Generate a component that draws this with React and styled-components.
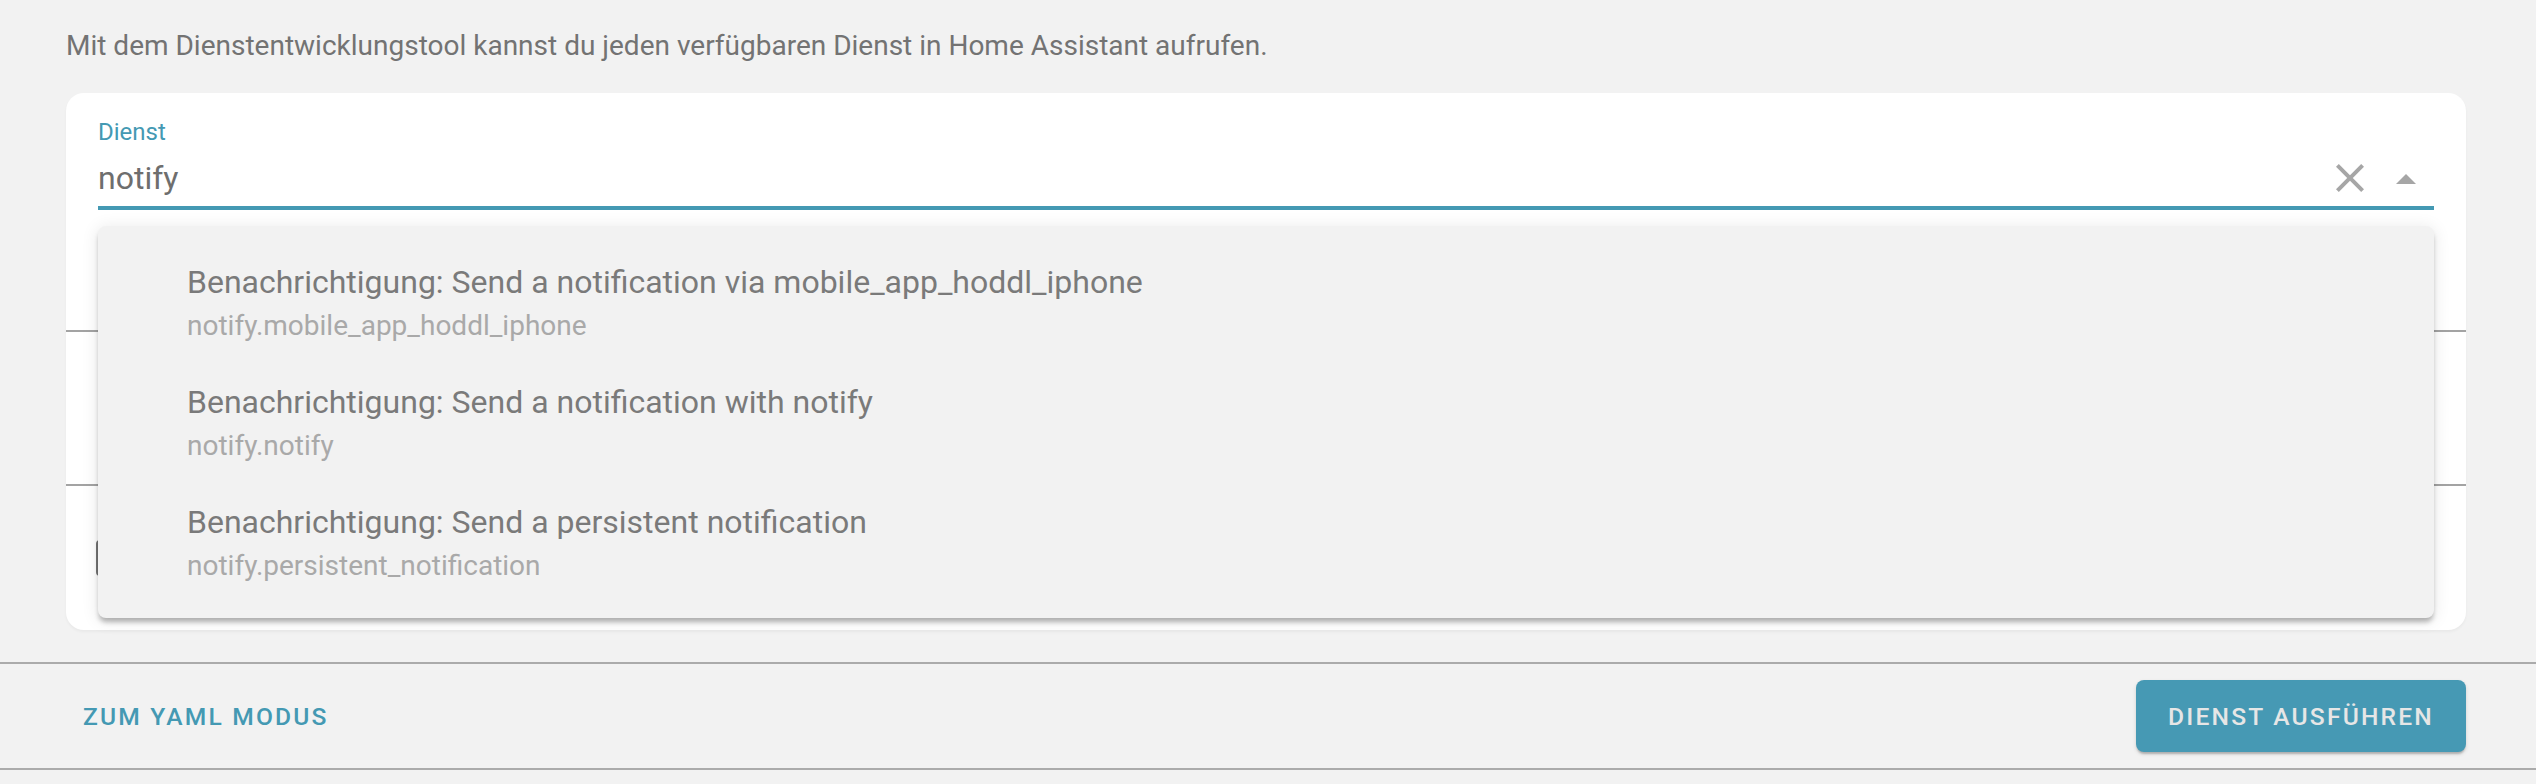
import React from "react";
import styled, { createGlobalStyle } from "styled-components";

const GlobalStyle = createGlobalStyle`
  html, body {
    margin: 0;
    padding: 0;
    background: #f2f2f2;
    font-family: Roboto, "Noto Sans", "Liberation Sans", sans-serif;
  }
`;

const Main = styled.div`
  padding: 26px 70px 0 66px;
`;

const Description = styled.p`
  margin: 0;
  font-size: 28px;
  line-height: 40px;
  color: #737373;
`;

const Card = styled.div`
  position: relative;
  margin-top: 27px;
  background: #ffffff;
  border-radius: 18px;
  box-shadow: 0 2px 3px rgba(0, 0, 0, 0.04);
`;

const Field = styled.div`
  padding: 27px 32px 0;
`;

const Label = styled.div`
  font-size: 24px;
  line-height: 24px;
  color: #4499b3;
`;

const InputRow = styled.div`
  display: flex;
  align-items: center;
  height: 48px;
  margin-top: 10px;
  margin-bottom: 4px;
`;

const Value = styled.div`
  flex: 1;
  font-size: 32px;
  line-height: 48px;
  color: #6e6e6e;
`;

const IconButton = styled.div`
  width: 48px;
  height: 48px;
  margin-left: ${(props) => props.gap || 0}px;
  margin-right: ${(props) => props.end || 0}px;
  display: flex;
  align-items: center;
  justify-content: center;
  color: #a6a6a6;
`;

const Underline = styled.div`
  height: 4px;
  background: #4499b3;
`;

const Section = styled.div`
  height: ${(props) => props.h}px;
  display: flex;
  align-items: center;
  padding-left: 30px;
`;

const Divider = styled.div`
  height: 2px;
  background: #a3a3a3;
`;

const Checkbox = styled.div`
  width: 36px;
  height: 36px;
  box-sizing: border-box;
  border: 4px solid #757575;
  border-radius: 4px;
`;

const Menu = styled.div`
  position: absolute;
  top: 133px;
  left: 32px;
  right: 32px;
  padding: 16px 0;
  background: #f2f2f2;
  border-radius: 8px;
  box-shadow: 0 5px 5px -1px rgba(0, 0, 0, 0.28), 0 2px 16px 2px rgba(0, 0, 0, 0.08);
  z-index: 2;
`;

const Item = styled.div`
  padding: 20px 32px 20px 89px;
`;

const Primary = styled.div`
  font-size: 32px;
  line-height: 40px;
  color: #7a7a7a;
`;

const Secondary = styled.div`
  margin-top: 8px;
  font-size: 28px;
  line-height: 32px;
  color: #a9a9a9;
`;

const Footer = styled.div`
  margin-top: 32px;
  display: flex;
  align-items: center;
  justify-content: space-between;
  padding: 16px 70px 16px 67px;
  border-top: 2px solid #ababab;
  border-bottom: 2px solid #ababab;
`;

const TextButton = styled.div`
  padding: 0 16px;
  height: 72px;
  display: flex;
  align-items: center;
  font-size: 24.6px;
  font-weight: 500;
  letter-spacing: 2.2px;
  color: #4499b3;
`;

const RaisedButton = styled.div`
  height: 72px;
  padding: 0 32px;
  display: flex;
  align-items: center;
  border-radius: 8px;
  background: #4699b4;
  color: #e6e6e6;
  font-size: 24.6px;
  font-weight: 500;
  letter-spacing: 2.2px;
  box-shadow: 0 3px 2px -1px rgba(0, 0, 0, 0.2), 0 2px 4px rgba(0, 0, 0, 0.12);
`;

const services = [
  {
    name: "Benachrichtigung: Send a notification via mobile_app_hoddl_iphone",
    id: "notify.mobile_app_hoddl_iphone",
  },
  {
    name: "Benachrichtigung: Send a notification with notify",
    id: "notify.notify",
  },
  {
    name: "Benachrichtigung: Send a persistent notification",
    id: "notify.persistent_notification",
  },
];

const App = () => {
  return (
    <>
      <GlobalStyle />
      <Main>
        <Description>
          Mit dem Dienstentwicklungstool kannst du jeden verfügbaren Dienst in Home Assistant aufrufen.
        </Description>
        <Card>
          <Field>
            <Label>Dienst</Label>
            <InputRow>
              <Value>notify</Value>
              <IconButton>
                <svg width="48" height="48" viewBox="0 0 24 24" fill="currentColor">
                  <path d="M19,6.41L17.59,5L12,10.59L6.41,5L5,6.41L10.59,12L5,17.59L6.41,19L12,13.41L17.59,19L19,17.59L13.41,12L19,6.41Z" />
                </svg>
              </IconButton>
              <IconButton gap={8} end={4}>
                <svg width="48" height="48" viewBox="0 0 24 24" fill="currentColor">
                  <path d="M7,15L12,10L17,15H7Z" />
                </svg>
              </IconButton>
            </InputRow>
            <Underline />
          </Field>
          <Section h={120} />
          <Divider />
          <Section h={152} />
          <Divider />
          <Section h={144}>
            <Checkbox />
          </Section>

          <Menu>
            {services.map((service) => (
              <Item key={service.id}>
                <Primary>{service.name}</Primary>
                <Secondary>{service.id}</Secondary>
              </Item>
            ))}
          </Menu>
        </Card>
      </Main>
      <Footer>
        <TextButton>ZUM YAML MODUS</TextButton>
        <RaisedButton>DIENST AUSFÜHREN</RaisedButton>
      </Footer>
    </>
  );
};

export default App;
